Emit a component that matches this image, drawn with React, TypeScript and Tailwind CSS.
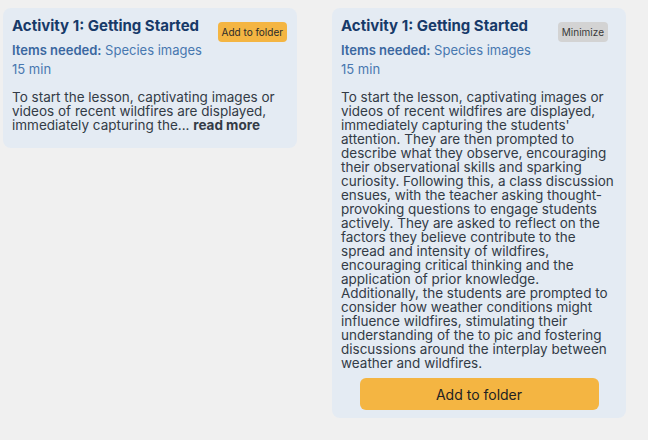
import React from 'react';

const FULL_TEXT =
  "To start the lesson, captivating images or videos of recent wildfires are displayed, immediately capturing the students' attention. They are then prompted to describe what they observe, encouraging their observational skills and sparking curiosity. Following this, a class discussion ensues, with the teacher asking thought-provoking questions to engage students actively. They are asked to reflect on the factors they believe contribute to the spread and intensity of wildfires, encouraging critical thinking and the application of prior knowledge. Additionally, the students are prompted to consider how weather conditions might influence wildfires, stimulating their understanding of the to pic and fostering discussions around the interplay between weather and wildfires.";

const SHORT_TEXT =
  'To start the lesson, captivating images or videos of recent wildfires are displayed, immediately capturing the...';

const ActivityCard: React.FC<{ expanded: boolean }> = ({ expanded }) => {
  return (
    <div
      className={
        expanded
          ? 'w-[294px] rounded-lg bg-[#e4ebf3] px-[9px] pt-[9px] pb-2 flex flex-col self-start'
          : 'w-[294px] rounded-lg bg-[#e4ebf3] px-[9px] pt-[9px] pb-[16px] flex flex-col self-start'
      }
    >
      <div className="flex items-start justify-between">
        <h3 className="text-[15px] leading-[17px] font-bold text-[#173a69]">Activity 1: Getting Started</h3>
        {expanded ? (
          <button className="mt-[5px] mr-[9px] h-5 px-1 rounded bg-[#d3d3d3] text-[10px] text-[#3a3a3a]">
            Minimize
          </button>
        ) : (
          <button className="mt-[5px] mr-px h-5 px-1 rounded bg-[#f4b542] text-[10px] text-[#2b2b2b]">
            Add to folder
          </button>
        )}
      </div>
      <div className="text-[13px] leading-[16px] text-[#4878b0]">
        <span className="font-semibold text-[#3a67a0]">Items needed:</span> Species images
      </div>
      <div className="mt-[3px] text-[13px] leading-[16px] text-[#4878b0]">15 min</div>
      <p className="mt-[13px] text-[13.5px] leading-[14px] text-[#333b46]">
        {expanded ? (
          FULL_TEXT
        ) : (
          <>
            {SHORT_TEXT} <span className="font-bold">read more</span>
          </>
        )}
      </p>
      {expanded && (
        <button className="mt-[8px] mx-auto w-[239px] h-8 rounded-md bg-[#f4b542] text-[14px] text-[#222]">
          Add to folder
        </button>
      )}
    </div>
  );
};

export default function App() {
  return (
    <div
      className="w-[648px] h-[440px] bg-[#f0f0f0] flex gap-[35px] pl-[3px] pt-2"
      style={{ fontFamily: 'Inter, "Noto Sans", sans-serif' }}
    >
      <ActivityCard expanded={false} />
      <ActivityCard expanded />
    </div>
  );
}
